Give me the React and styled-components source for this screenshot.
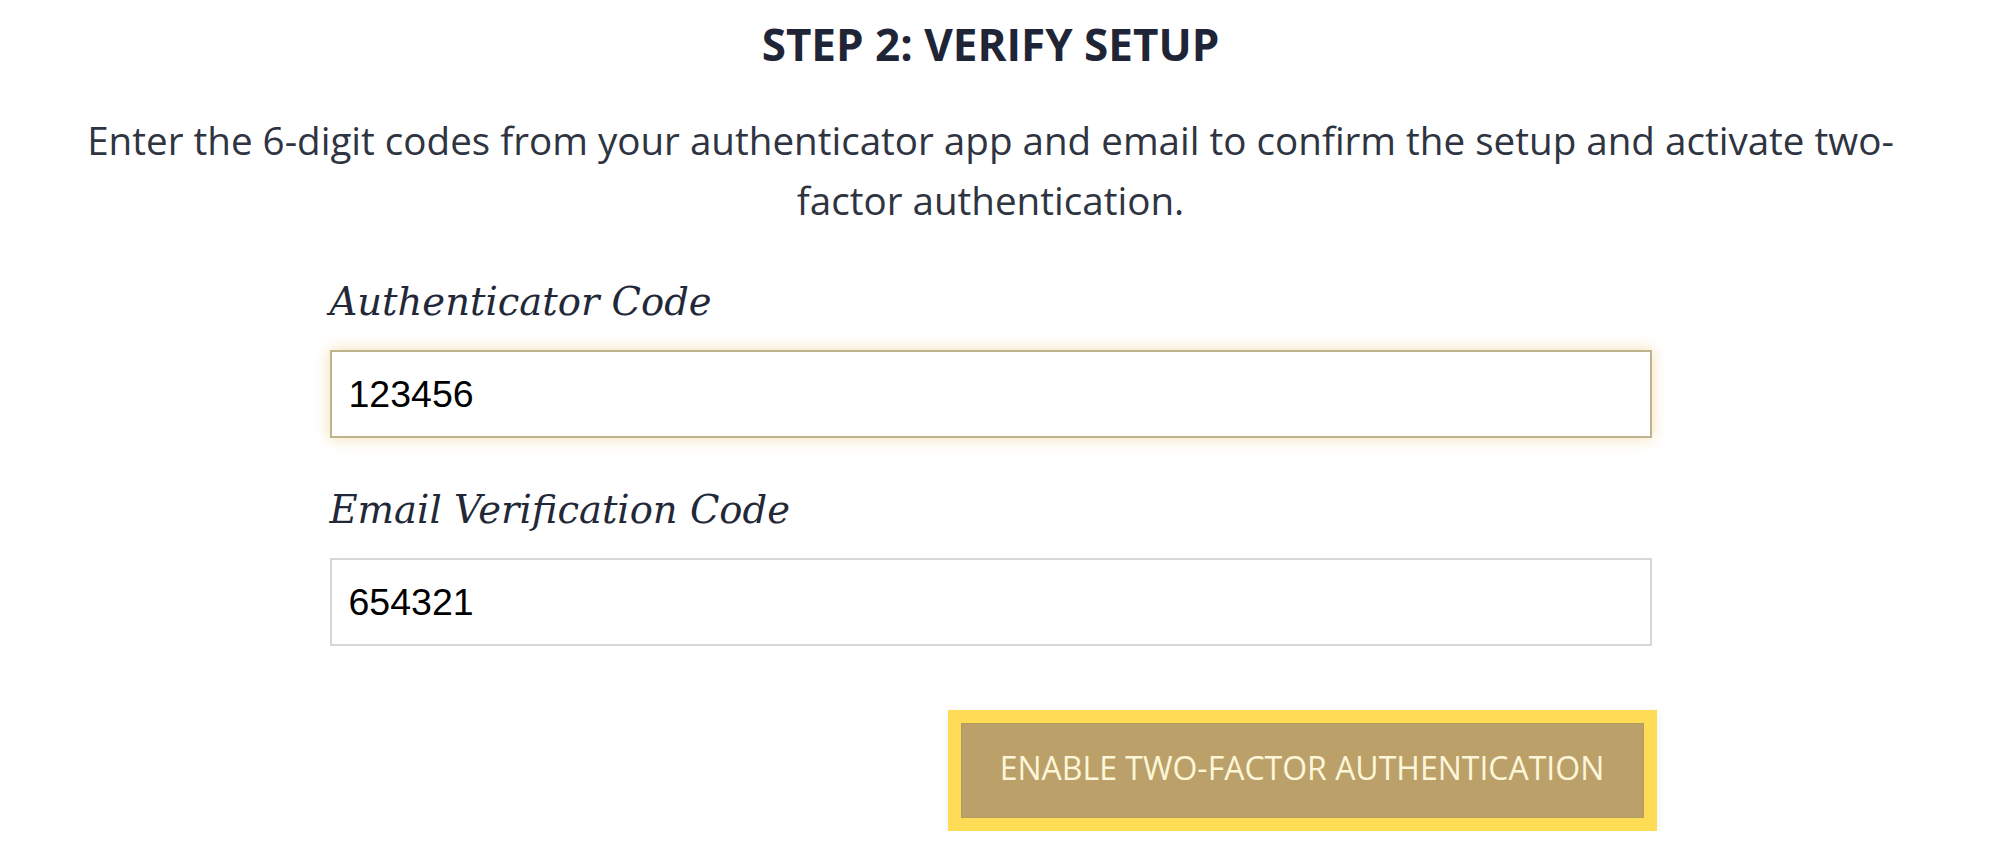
import styled, { createGlobalStyle } from "styled-components";

const GlobalStyle = createGlobalStyle`
  body {
    margin: 0;
    background: #ffffff;
  }
  * {
    box-sizing: border-box;
  }
`;

export default function App() {
  return (
    <>
      <GlobalStyle />
      <Page>
        <Title>STEP 2: VERIFY SETUP</Title>
        <Intro>
          Enter the 6-digit codes from your authenticator app and email to
          confirm the setup and activate two-factor authentication.
        </Intro>
        <Form onSubmit={(e) => e.preventDefault()}>
          <Field>
            <Label htmlFor="auth-code">Authenticator Code</Label>
            <CodeInput id="auth-code" defaultValue="123456" focused />
          </Field>
          <Field>
            <Label htmlFor="email-code">Email Verification Code</Label>
            <CodeInput id="email-code" defaultValue="654321" />
          </Field>
          <Actions>
            <SubmitButton type="submit">ENABLE TWO-FACTOR AUTHENTICATION</SubmitButton>
          </Actions>
        </Form>
      </Page>
    </>
  );
}

// ---------------------css

const Page = styled.main`
  width: 100%;
  display: flex;
  flex-direction: column;
  align-items: center;
  padding: 22px 12px 0 0;
`;

const Title = styled.h2`
  margin: 0;
  font-family: "Open Sans", sans-serif;
  font-weight: 700;
  font-size: 44px;
  line-height: 44px;
  color: #1f2536;
`;

const Intro = styled.p`
  margin: 44px 0 0;
  max-width: 1850px;
  text-align: center;
  font-family: "Open Sans", sans-serif;
  font-size: 38.6px;
  line-height: 60px;
  color: #2f3441;
`;

const Form = styled.form`
  width: 1322px;
  display: flex;
  flex-direction: column;
`;

const Field = styled.div`
  display: flex;
  flex-direction: column;
  margin-top: 50px;
`;

const Label = styled.label`
  font-family: "DejaVu Serif", serif;
  font-style: italic;
  font-size: 38.5px;
  line-height: 44px;
  color: #232838;
  margin-bottom: 26px;
`;

const CodeInput = styled.input`
  width: 100%;
  height: 88px;
  padding: 0 17px;
  font-family: "Liberation Sans", Arial, sans-serif;
  font-size: 37.5px;
  color: #000000;
  background: #ffffff;
  outline: none;
  border: 2px solid ${(props) => (props.focused ? "#bfb38b" : "#d7d7d7")};
  box-shadow: ${(props) =>
    props.focused ? "0 0 14px rgba(236, 192, 112, 0.55)" : "none"};
`;

const Actions = styled.div`
  display: flex;
  justify-content: flex-end;
  margin-top: 64px;
  margin-right: -5px;
`;

const SubmitButton = styled.button`
  width: 709px;
  height: 121px;
  border: 13px solid #ffdc55;
  background: #bba06a;
  box-shadow: inset 0 0 0 1px #b39a5e, 0 2px 8px rgba(0, 0, 0, 0.08);
  color: #fdf6d8;
  font-family: "Open Sans", sans-serif;
  font-size: 32px;
  padding: 0 0 6px;
  cursor: pointer;
`;
